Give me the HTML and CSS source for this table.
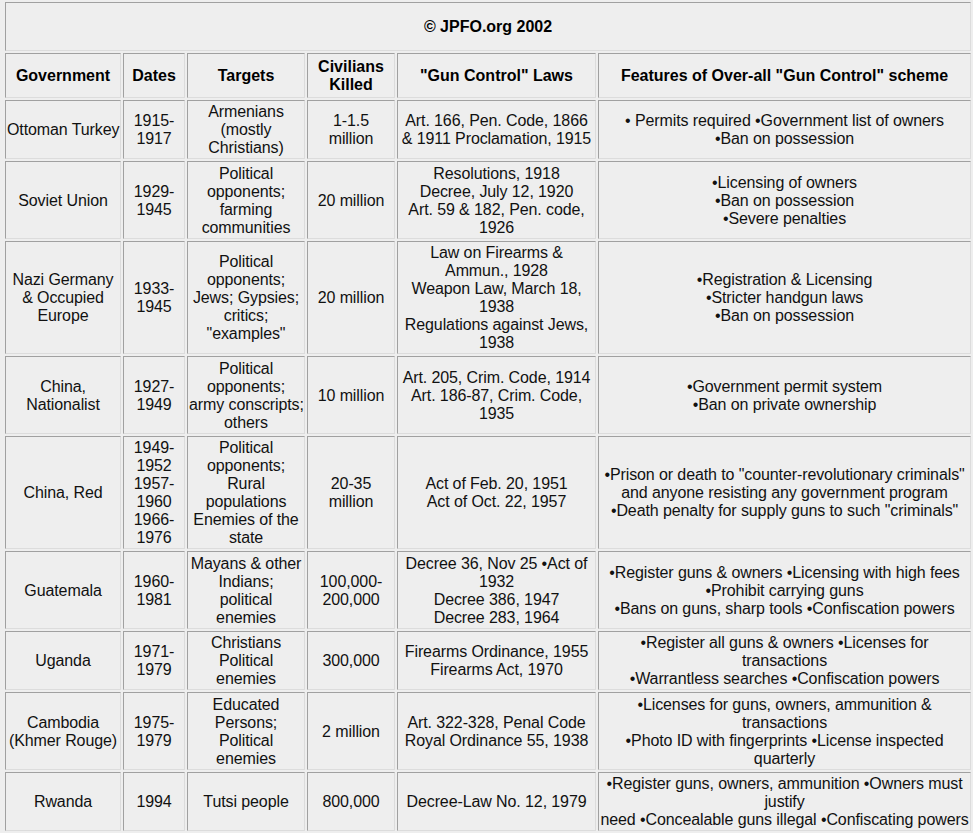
FILE: index.html
```html
<!DOCTYPE html>
<html>
<head>
<meta charset="utf-8">
<title>Gun Control</title>
<link rel="stylesheet" href="styles.css">
</head>
<body>
<table class="gc">
<colgroup>
<col class="c-gov"><col class="c-dates"><col class="c-targets"><col class="c-civ"><col class="c-laws"><col class="c-feat">
</colgroup>
<tr class="title-row"><th colspan="6">© JPFO.org 2002</th></tr>
<tr class="head-row">
<th>Government</th><th>Dates</th><th>Targets</th><th>Civilians<br>Killed</th><th>"Gun Control" Laws</th><th>Features of Over-all "Gun Control" scheme</th>
</tr>
<tr class="r3">
<td>Ottoman Turkey</td><td>1915-<br>1917</td><td>Armenians<br>(mostly<br>Christians)</td><td>1-1.5<br>million</td><td>Art. 166, Pen. Code, 1866<br>&amp; 1911 Proclamation, 1915</td><td>• Permits required •Government list of owners<br>•Ban on possession</td>
</tr>
<tr class="r4">
<td>Soviet Union</td><td>1929-<br>1945</td><td>Political<br>opponents;<br>farming<br>communities</td><td>20 million</td><td>Resolutions, 1918<br>Decree, July 12, 1920<br>Art. 59 &amp; 182, Pen. code,<br>1926</td><td>•Licensing of owners<br>•Ban on possession<br>•Severe penalties</td>
</tr>
<tr class="r6">
<td>Nazi Germany<br>&amp; Occupied<br>Europe</td><td>1933-<br>1945</td><td>Political<br>opponents;<br>Jews; Gypsies;<br>critics;<br>"examples"</td><td>20 million</td><td>Law on Firearms &amp;<br>Ammun., 1928<br>Weapon Law, March 18,<br>1938<br>Regulations against Jews,<br>1938</td><td>•Registration &amp; Licensing<br>•Stricter handgun laws<br>•Ban on possession</td>
</tr>
<tr class="r4">
<td>China,<br>Nationalist</td><td>1927-<br>1949</td><td>Political<br>opponents;<br>army conscripts;<br>others</td><td>10 million</td><td>Art. 205, Crim. Code, 1914<br>Art. 186-87, Crim. Code,<br>1935</td><td>•Government permit system<br>•Ban on private ownership</td>
</tr>
<tr class="r6">
<td>China, Red</td><td>1949-<br>1952<br>1957-<br>1960<br>1966-<br>1976</td><td>Political<br>opponents;<br>Rural<br>populations<br>Enemies of the<br>state</td><td>20-35<br>million</td><td>Act of Feb. 20, 1951<br>Act of Oct. 22, 1957</td><td>•Prison or death to "counter-revolutionary criminals"<br>and anyone resisting any government program<br>•Death penalty for supply guns to such "criminals"</td>
</tr>
<tr class="r4">
<td>Guatemala</td><td>1960-<br>1981</td><td>Mayans &amp; other<br>Indians;<br>political<br>enemies</td><td>100,000-<br>200,000</td><td>Decree 36, Nov 25 •Act of<br>1932<br>Decree 386, 1947<br>Decree 283, 1964</td><td>•Register guns &amp; owners •Licensing with high fees<br>•Prohibit carrying guns<br>•Bans on guns, sharp tools •Confiscation powers</td>
</tr>
<tr class="r3">
<td>Uganda</td><td>1971-<br>1979</td><td>Christians<br>Political<br>enemies</td><td>300,000</td><td>Firearms Ordinance, 1955<br>Firearms Act, 1970</td><td>•Register all guns &amp; owners •Licenses for<br>transactions<br>•Warrantless searches •Confiscation powers</td>
</tr>
<tr class="r4">
<td>Cambodia<br>(Khmer Rouge)</td><td>1975-<br>1979</td><td>Educated<br>Persons;<br>Political<br>enemies</td><td>2 million</td><td>Art. 322-328, Penal Code<br>Royal Ordinance 55, 1938</td><td>•Licenses for guns, owners, ammunition &amp;<br>transactions<br>•Photo ID with fingerprints •License inspected<br>quarterly</td>
</tr>
<tr class="r3">
<td>Rwanda</td><td>1994</td><td>Tutsi people</td><td>800,000</td><td>Decree-Law No. 12, 1979</td><td>•Register guns, owners, ammunition •Owners must<br>justify<br>need •Concealable guns illegal •Confiscating powers</td>
</tr>
</table>
</body>
</html>
```
FILE: styles.css
```css
html, body {
  margin: 0;
  padding: 0;
  background: #eeeeee;
}

.gc {
  border-collapse: separate;
  border-spacing: 2px;
  table-layout: fixed;
  width: 970px;
  margin-left: 3px;
  font-family: "Liberation Sans", Arial, sans-serif;
  font-size: 16px;
  line-height: 18px;
  color: #111111;
  background: #eeeeee;
}

.c-gov { width: 116px; }
.c-dates { width: 62px; }
.c-targets { width: 118px; }
.c-civ { width: 88px; }
.c-laws { width: 199px; }
.c-feat { width: 373px; }

.gc th,
.gc td {
  border: 1px solid;
  border-color: #a0a0a0 #dcdcdc #dcdcdc #a0a0a0;
  padding: 2px 1px 1px;
  text-align: center;
  vertical-align: middle;
  white-space: nowrap;
}

.gc td {
  letter-spacing: -0.1px;
}

.gc th {
  font-weight: bold;
  color: #000000;
}

.title-row { height: 49px; }
.head-row { height: 45px; }
.r3 { height: 59px; }
.r4 { height: 78px; }
.r6 { height: 113px; }
```
